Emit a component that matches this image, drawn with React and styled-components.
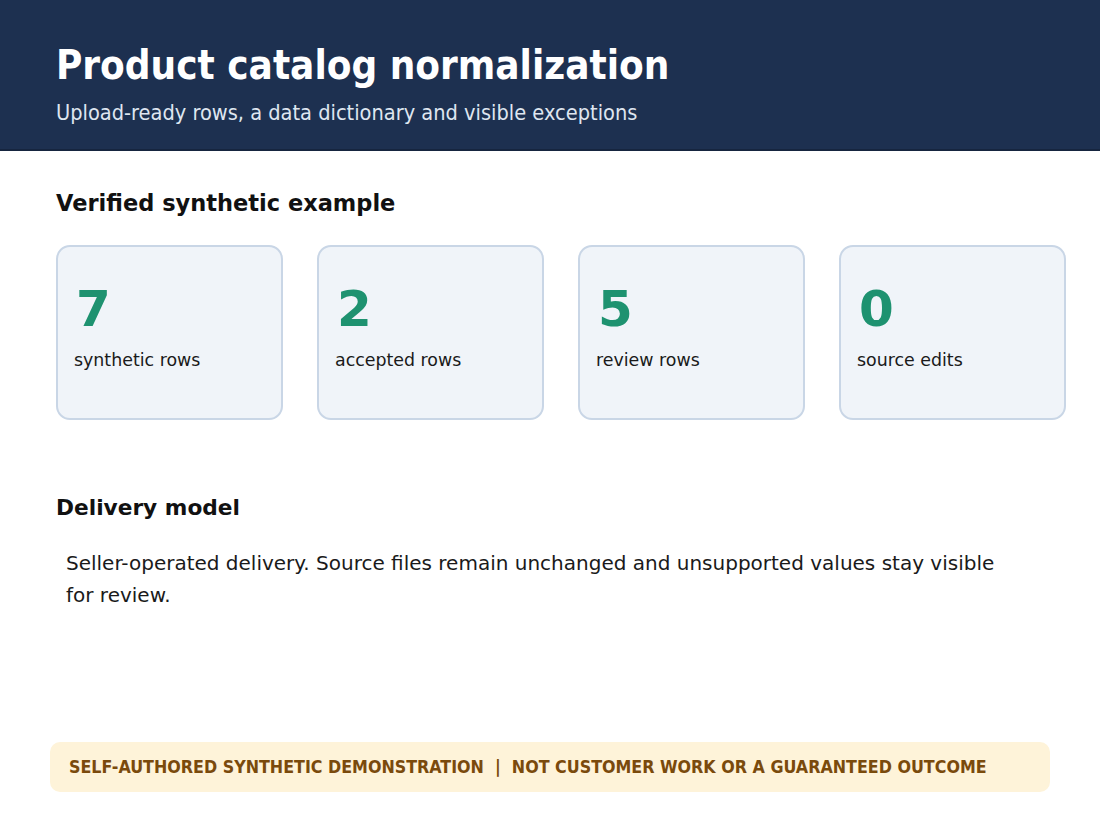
import React from "react";
import styled, { createGlobalStyle } from "styled-components";

const Global = createGlobalStyle`
  html, body { margin: 0; padding: 0; background: #ffffff; }
  body { font-family: "DejaVu Sans", Verdana, sans-serif; color: #111; }
`;

const Page = styled.div`
  width: 1100px;
  height: 825px;
  display: flex;
  flex-direction: column;
  background: #fff;
  overflow: hidden;
`;

const Header = styled.header`
  background: #1d3050;
  border-bottom: 2px solid #16253f;
  height: 151px;
  box-sizing: border-box;
  padding: 40px 56px 0;
  display: flex;
  flex-direction: column;
  gap: 10px;
`;

const Title = styled.h1`
  margin: 0;
  font-family: "DejaVu Sans Condensed", "DejaVu Sans", sans-serif;
  font-stretch: condensed;
  font-weight: 700;
  font-size: 40px;
  line-height: 50px;
  color: #ffffff;
`;

const Subtitle = styled.p`
  margin: 0;
  font-family: "DejaVu Sans Condensed", "DejaVu Sans", sans-serif;
  font-stretch: condensed;
  font-size: 21.6px;
  line-height: 26px;
  color: #dfe6f0;
`;

const Main = styled.main`
  flex: 1;
  display: flex;
  flex-direction: column;
  padding: 37px 34px 0 56px;
`;

const SectionTitle = styled.h2`
  margin: ${(p) => p.$top || 0}px 0 0;
  font-size: ${(p) => p.$size || 22.5}px;
  line-height: 30px;
  font-weight: 700;
  color: #111;
`;

const Cards = styled.div`
  display: grid;
  grid-template-columns: repeat(4, 227px);
  column-gap: 34px;
  margin-top: 27px;
`;

const Card = styled.div`
  height: 175px;
  box-sizing: border-box;
  border: 2px solid #c9d6e6;
  border-radius: 14px;
  background: #f0f4f9;
  padding: 34px 16px 0;
  display: flex;
  flex-direction: column;
`;

const Value = styled.div`
  font-size: 50px;
  line-height: 56px;
  font-weight: 700;
  color: #1e9270;
  padding-left: 2px;
`;

const Label = styled.div`
  margin-top: 12px;
  font-size: 17.4px;
  line-height: 22px;
  color: #1a1a1a;
`;

const Paragraph = styled.p`
  margin: 24px 0 0 10px;
  max-width: 940px;
  font-size: 20px;
  line-height: 32px;
  color: #1a1a1a;
`;

const Banner = styled.div`
  margin: auto 50px 33px 50px;
  height: 50px;
  box-sizing: border-box;
  background: #fef3d9;
  border-radius: 10px;
  display: flex;
  align-items: center;
  padding-left: 19px;
  font-family: "DejaVu Sans Condensed", "DejaVu Sans", sans-serif;
  font-stretch: condensed;
  font-weight: 700;
  font-size: 17.7px;
  color: #7a4a0c;
  white-space: pre;
`;

const stats = [
  { value: "7", label: "synthetic rows" },
  { value: "2", label: "accepted rows" },
  { value: "5", label: "review rows" },
  { value: "0", label: "source edits" },
];

export default function App() {
  return (
    <Page>
      <Global />
      <Header>
        <Title>Product catalog normalization</Title>
        <Subtitle>Upload-ready rows, a data dictionary and visible exceptions</Subtitle>
      </Header>
      <Main>
        <SectionTitle>Verified synthetic example</SectionTitle>
        <Cards>
          {stats.map((s) => (
            <Card key={s.label}>
              <Value>{s.value}</Value>
              <Label>{s.label}</Label>
            </Card>
          ))}
        </Cards>
        <SectionTitle $top={73} $size={21.7}>Delivery model</SectionTitle>
        <Paragraph>
          Seller-operated delivery. Source files remain unchanged and unsupported values stay visible for review.
        </Paragraph>
      </Main>
      <Banner>{"SELF-AUTHORED SYNTHETIC DEMONSTRATION  |  NOT CUSTOMER WORK OR A GUARANTEED OUTCOME"}</Banner>
    </Page>
  );
}
